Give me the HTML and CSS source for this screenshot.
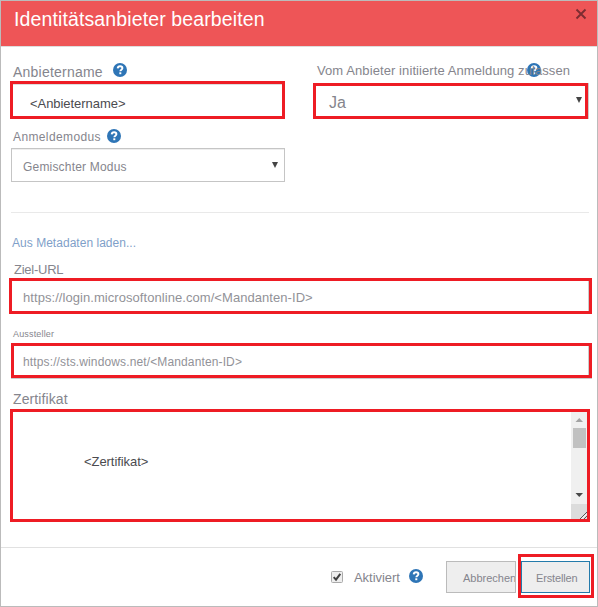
FILE: index.html
```html
<!DOCTYPE html>
<html lang="de">
<head>
<meta charset="utf-8">
<title>Identitätsanbieter bearbeiten</title>
<link rel="stylesheet" href="styles.css">
</head>
<body>
<svg class="defs" width="0" height="0" aria-hidden="true">
  <symbol id="help" viewBox="0 0 14 14">
    <circle cx="7" cy="7" r="7" fill="#2e75b6"/>
    <path d="M4.7 5.4C4.8 3.9 5.8 3.3 7.1 3.3C8.5 3.3 9.4 4.1 9.4 5.2C9.4 6.6 7.3 6.7 7.3 8.3" fill="none" stroke="#fff" stroke-width="1.9"/>
    <rect x="6.3" y="9.3" width="2" height="1.9" fill="#fff"/>
  </symbol>
</svg>
<main class="dialog">
  <header class="header">
    <h1 class="title">Identitätsanbieter bearbeiten</h1>
    <svg class="close" width="12" height="12" viewBox="0 0 12 12"><path d="M1.5 1.5L10.5 10.5M10.5 1.5L1.5 10.5" stroke="#7c2c31" stroke-width="1.9"/></svg>
  </header>
  <section class="form">
    <div class="columns">
      <div class="field">
        <div class="label label-name"><span>Anbietername</span><svg class="help"><use href="#help"/></svg></div>
        <div class="box marked box-name"><span>&lt;Anbietername&gt;</span></div>
      </div>
      <div class="field">
        <div class="label label-initiated"><svg class="help overlay"><use href="#help"/></svg><span class="front">Vom Anbieter initiierte Anmeldung zulassen</span></div>
        <div class="box marked box-initiated"><span>Ja</span><i class="arrow"></i></div>
      </div>
    </div>
    <div class="label label-mode"><span>Anmeldemodus</span><svg class="help"><use href="#help"/></svg></div>
    <div class="box select"><span>Gemischter Modus</span><i class="arrow"></i></div>
    <hr class="rule">
    <a class="link">Aus Metadaten laden...</a>
    <div class="label label-url">Ziel-URL</div>
    <div class="box marked box-url">https://login.microsoftonline.com/&lt;Mandanten-ID&gt;</div>
    <div class="label label-issuer">Aussteller</div>
    <div class="box marked box-issuer">https://sts.windows.net/&lt;Mandanten-ID&gt;</div>
    <div class="label label-cert">Zertifikat</div>
    <div class="marked cert">
      <div class="cert-text">&lt;Zertifikat&gt;</div>
      <div class="scrollbar">
        <svg width="16" height="16"><path d="M4.5 10h7.5L8.25 6z" fill="#a3a3a3"/></svg>
        <div class="thumb"></div>
        <svg class="down" width="16" height="16"><path d="M4.5 5h7.5L8.25 9z" fill="#484848"/></svg>
        <svg class="grip" width="16" height="15"><path d="M9 15L16 8M13 15L16 12" stroke="#555" stroke-width="1"/><path d="M10.5 15L16 9.5" stroke="#fff" stroke-width="1"/></svg>
      </div>
    </div>
  </section>
  <footer class="footer">
    <svg class="check" width="12" height="12" viewBox="0 0 12 12"><rect x=".5" y=".5" width="11" height="11" rx="1" fill="#eee" stroke="#aaa"/><path d="M2.7 6.1L5 8.6L9.3 2.8" fill="none" stroke="#404040" stroke-width="2"/></svg>
    <span class="active">Aktiviert</span>
    <svg class="help"><use href="#help"/></svg>
    <div class="button cancel">Abbrechen</div>
    <div class="create-mark"><div class="button create">Erstellen</div></div>
  </footer>
</main>
</body>
</html>
```
FILE: styles.css
```css
* { box-sizing: border-box; }
body { margin: 0; font-family: "Liberation Sans", Arial, sans-serif; color: #85858d; background: #fff; }
.defs { display: block; }
.dialog { width: 598px; height: 607px; border: 1px solid #bbb; background: #fff; display: flex; flex-direction: column; overflow: hidden; }
.header { height: 46px; flex: none; background: #ee5557; border-bottom: 1px solid #ddd; display: flex; justify-content: space-between; padding: 0 10px 0 13px; }
.title { margin: 0; font-size: 19.5px; font-weight: 400; line-height: 37px; letter-spacing: .12px; color: #fff; white-space: nowrap; }
.close { margin-top: 7px; }
.form { height: 500px; flex: none; display: flex; flex-direction: column; padding-left: 9px; }
.columns { display: flex; gap: 28px; height: 72px; }
.field { width: 275px; }
.label { display: flex; white-space: nowrap; }
.help { width: 14px; height: 14px; flex: none; display: block; }
.label-name { height: 34px; padding: 15px 0 0 3px; font-size: 14px; line-height: 20px; letter-spacing: .22px; }
.label-name .help { margin: 1px 0 0 10px; }
.label-initiated { height: 36px; padding: 15px 0 0 4px; font-size: 13px; line-height: 18px; letter-spacing: .09px; position: relative; }
.overlay { position: absolute; left: 214px; top: 16px; }
.front { position: relative; }
.box { display: flex; align-items: center; white-space: nowrap; background: #fff; }
.marked { border: 3px solid #ee1c24; }
.box-name { height: 38px; padding: 6px 0 0 17px; font-size: 13px; letter-spacing: -.05px; color: #4b4b4f; box-shadow: inset 0 1px #ddd; }
.box-initiated { height: 36px; padding: 4px 3px 0 13px; justify-content: space-between; font-size: 16px; box-shadow: 1px 0 #ccc; }
.arrow { width: 0; height: 0; border: solid transparent; border-width: 6px 3px 0; border-top-color: #444; }
.box-initiated .arrow { margin-bottom: 7px; }
.label-mode { height: 29px; padding: 9px 0 0 3px; font-size: 12px; line-height: 18px; letter-spacing: .38px; }
.label-mode .help { margin: 1px 0 0 6px; }
.select { width: 274px; height: 34px; margin-left: 1px; padding: 3px 6px 0 11px; border: 1px solid #c5c5c5; box-shadow: inset 0 1px #eee; justify-content: space-between; font-size: 12px; letter-spacing: .19px; }
.select .arrow { margin-bottom: 3px; }
.rule { width: 578px; height: 1px; margin: 30px 0 0 1px; border: 0; background: #e9e9e9; }
.link { height: 49px; padding: 21px 0 0 2px; font-size: 12px; line-height: 18px; color: #7f9fc9; letter-spacing: .03px; }
.label-url { height: 16px; padding-left: 4px; font-size: 13px; line-height: 16px; letter-spacing: -.25px; }
.box-url { width: 583px; height: 36px; margin-left: -1px; padding: 3px 0 0 11px; font-size: 13px; letter-spacing: .06px; color: #929298; box-shadow: inset -1px 0 #ccc; }
.label-issuer { height: 29px; padding: 14px 0 0 3px; font-size: 9px; line-height: 12px; letter-spacing: .17px; }
.box-issuer { width: 581px; height: 35px; margin-left: 1px; padding: 3px 0 0 9px; font-size: 12px; letter-spacing: .13px; color: #929298; box-shadow: inset -1px 0 #ccc, 0 1px #ccc; }
.label-cert { height: 31px; padding: 11px 0 0 3px; font-size: 14px; line-height: 20px; letter-spacing: .1px; }
.cert { width: 580px; height: 113px; display: flex; }
.cert-text { flex: 1; padding: 41px 0 0 71px; font-size: 13px; line-height: 18px; letter-spacing: -.06px; color: #4b4b4f; }
.scrollbar { width: 16px; height: 107px; background: #f0f0f0; display: flex; flex-direction: column; }
.thumb { width: 13px; height: 20px; margin-left: 2px; background: #c1c1c1; flex: none; }
.down { margin-top: 40px; flex: none; }
.grip { background: #dcdcdc; flex: none; }
.footer { height: 59px; flex: none; border-top: 1px solid #e1e1e1; display: flex; padding-left: 330px; }
.check { margin-top: 23px; flex: none; }
.active { box-sizing: content-box; width: 46px; padding: 21px 0 0 11px; font-size: 13px; line-height: 18px; letter-spacing: -.05px; }
.footer .help { margin: 21px 0 0 9px; }
.button { height: 32px; background: #eee; border: 1px solid #bbb; padding-top: 2px; font-size: 11px; line-height: 28px; white-space: nowrap; overflow: hidden; }
.cancel { width: 70px; margin: 13px 0 0 23px; padding-left: 16px; flex: none; }
.create-mark { width: 76px; height: 44px; margin: 6px 0 0 2px; border: 3px solid #ee1c24; padding-top: 4px; flex: none; }
.create { width: 69px; padding-left: 14px; border-color: #247bab; letter-spacing: -.15px; }
```
